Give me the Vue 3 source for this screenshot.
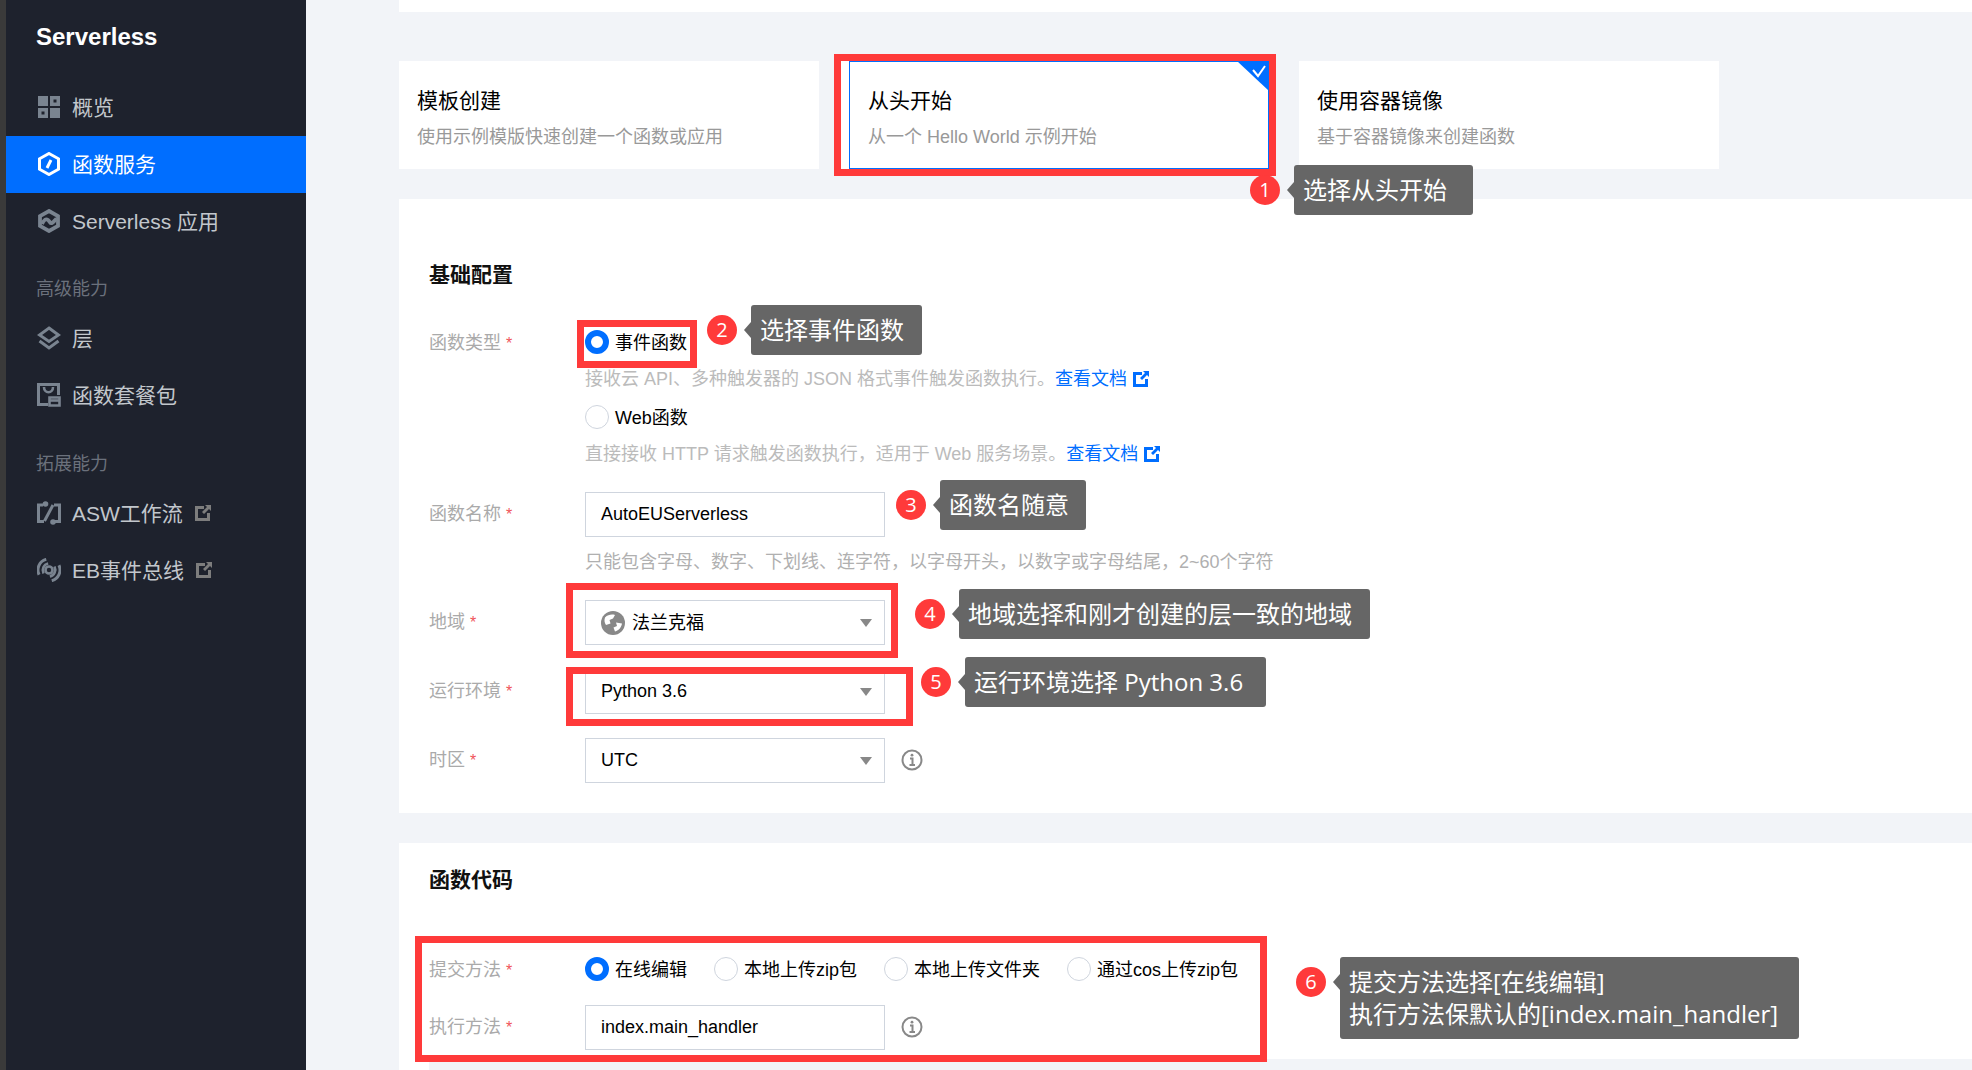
<template>
  <div class="page">
    <aside class="sidebar">
      <div class="brand">Serverless</div>
      <template v-for="group in menu" :key="group.title">
        <div v-if="group.title !== 'main'" class="menu-group">{{ group.title }}</div>
        <div
          v-for="item in group.items"
          :key="item.name"
          class="menu-item"
          :class="{ active: item.active }"
        >
          <svg class="menu-icon" viewBox="0 0 24 24">
            <template v-if="item.icon === 'overview'">
              <path fill-rule="evenodd" d="M1 1h10v10H1zM13 1h10v10H13zM16.500 4.500v3h3v-3zM1 13h10v10H1zM4.500 16.500v3h3v-3zM13 13h10v10H13z" />
            </template>
            <template v-else-if="item.icon === 'func'">
              <path class="line thick" d="M12 1.500 21.500 6.800V17.200L12 22.500 2.500 17.200V6.800Z" />
              <path class="line thick" d="M14 8 10 16" />
            </template>
            <template v-else-if="item.icon === 'app'">
              <path class="line heavy" d="M12 2 21 7V17L12 22 3 17V7Z" />
              <path class="line heavy" d="M5 15C7 10.500 9 9.500 11 11S13 15 15 14 17.500 11.500 19.500 9.500" />
            </template>
            <template v-else-if="item.icon === 'layer'">
              <path class="line thick" d="M12 2 21.500 9 12 15.500 2.500 9Z" />
              <path class="line thick" d="M2.500 15 12 22 21.500 15" />
            </template>
            <template v-else-if="item.icon === 'bundle'">
              <path class="line thick" d="M11 21.500H1.500V1.500H21.500V12" />
              <path class="line" d="M7 4C7 11 16 11 16 4" />
              <path class="line" d="M12.500 14.500H22.500V22.500H12.500Z" />
              <path class="line" d="M12.500 17.500H22.500" />
            </template>
            <template v-else-if="item.icon === 'flow'">
              <path class="line thick" d="M6 4H1.500V20.500H7M18 20.500H22.500V4H17" />
              <path class="line thick" d="M16 4 7.500 20" />
              <circle cx="8.500" cy="3" r="2.800" />
              <circle cx="16" cy="21" r="2.800" />
            </template>
            <template v-else>
              <g transform="rotate(25 12 12)">
                <path class="line thick" d="M5 3.500A11 11 0 0 0 5 20.500M19 3.500A11 11 0 0 1 19 20.500" />
                <path class="line" d="M8.500 6.500A7 7 0 0 0 8.500 17.500M15.500 6.500A7 7 0 0 1 15.500 17.500" />
              </g>
              <circle class="line" cx="12" cy="12" r="3.500" />
            </template>
          </svg>
          <span class="menu-text">{{ item.name }}</span>
          <svg v-if="item.external" class="ext-icon side-ext" viewBox="0 0 16 16">
            <path d="M0 1h9v3H3v9h9V8h3v8H0z" />
            <path d="M10 0h6v6l-2-2-5 5-2-2 5-5z" />
          </svg>
        </div>
      </template>
    </aside>

    <main class="main">
      <div class="top-strip"></div>

      <div class="cards">
        <div
          v-for="card in cards"
          :key="card.title"
          class="card"
          :class="{ selected: card.selected }"
        >
          <div class="card-title">{{ card.title }}</div>
          <div class="card-sub">{{ card.sub }}</div>
          <svg v-if="card.selected" class="card-check" viewBox="0 0 32 30">
            <path d="M0 0h32v30z" fill="#006eff" />
            <path d="M16 9l5 6 7-10" fill="none" stroke="#fff" stroke-width="2" />
          </svg>
        </div>
      </div>

      <section class="panel basic">
        <h2 class="panel-title">基础配置</h2>
        <div class="form">
          <div class="form-row">
            <label class="form-label short">函数类型<i>*</i></label>
            <div class="form-field">
              <div class="radio-line">
                <span class="radio on"></span>
                <span class="radio-text">事件函数</span>
              </div>
              <p class="desc first">
                接收云 API、多种触发器的 JSON 格式事件触发函数执行。<a>查看文档</a>
                <svg class="ext-icon blue" viewBox="0 0 16 16">
                  <path d="M0 1h9v3H3v9h9V8h3v8H0z" />
                  <path d="M10 0h6v6l-2-2-5 5-2-2 5-5z" />
                </svg>
              </p>
              <div class="radio-line second">
                <span class="radio"></span>
                <span class="radio-text">Web函数</span>
              </div>
              <p class="desc first">
                直接接收 HTTP 请求触发函数执行，适用于 Web 服务场景。<a>查看文档</a>
                <svg class="ext-icon blue" viewBox="0 0 16 16">
                  <path d="M0 1h9v3H3v9h9V8h3v8H0z" />
                  <path d="M10 0h6v6l-2-2-5 5-2-2 5-5z" />
                </svg>
              </p>
            </div>
          </div>

          <div class="form-row">
            <label class="form-label">函数名称<i>*</i></label>
            <div class="form-field">
              <div class="input">AutoEUServerless</div>
              <p class="desc hint">只能包含字母、数字、下划线、连字符，以字母开头，以数字或字母结尾，2~60个字符</p>
            </div>
          </div>

          <div class="form-row">
            <label class="form-label">地域<i>*</i></label>
            <div class="input select">
              <svg class="globe" viewBox="0 0 24 24">
                <circle cx="12" cy="12" r="12" fill="#888" />
                <path d="M4 6.500C7 3.500 11 3 14 4L12 7.500 8.500 9 9.500 12.500 5 14C3.500 12 3 9 4 6.500Z" fill="#fff" />
                <path d="M15 11.500 21 12.500C20.500 16 18 19.500 14 20.500L12.500 16.500 16 15Z" fill="#fff" />
              </svg>
              <span class="cjk-value">法兰克福</span>
            </div>
          </div>

          <div class="form-row">
            <label class="form-label">运行环境<i>*</i></label>
            <div class="input select">Python 3.6</div>
          </div>

          <div class="form-row">
            <label class="form-label">时区<i>*</i></label>
            <div class="input select">UTC</div>
            <svg class="info" viewBox="0 0 22 22">
              <circle cx="11" cy="11" r="9.500" />
              <path d="M9 9.500h2.500V16M8.500 16h5.500" />
              <circle class="dot" cx="11" cy="6.200" r="1.400" />
            </svg>
          </div>
        </div>
      </section>

      <section class="panel code">
        <h2 class="panel-title">函数代码</h2>
        <div class="form code-form">
          <div class="form-row">
            <label class="form-label short">提交方法<i>*</i></label>
            <div class="radio-group">
              <div v-for="way in submitWays" :key="way.name" class="radio-line" :class="way.cls">
                <span class="radio" :class="{ on: way.on }"></span>
                <span class="radio-text">{{ way.name }}</span>
              </div>
            </div>
          </div>
          <div class="form-row">
            <label class="form-label">执行方法<i>*</i></label>
            <div class="input">index.main_handler</div>
            <svg class="info" viewBox="0 0 22 22">
              <circle cx="11" cy="11" r="9.500" />
              <path d="M9 9.500h2.500V16M8.500 16h5.500" />
              <circle class="dot" cx="11" cy="6.200" r="1.400" />
            </svg>
          </div>
        </div>
        <div class="editor"></div>
      </section>
    </main>

    <!-- annotations drawn over the screenshot -->
    <div
      v-for="(box, i) in redBoxes"
      :key="'box' + i"
      class="red-box"
      :style="{ left: box[0] + 'px', top: box[1] + 'px', width: box[2] + 'px', height: box[3] + 'px' }"
    ></div>
    <template v-for="note in notes" :key="note.n">
      <div class="badge" :style="{ left: note.cx - 15 + 'px', top: note.cy - 15 + 'px' }">{{ note.n }}</div>
      <div
        class="bubble"
        :style="{ left: note.x + 'px', top: note.y + 'px', width: note.w + 'px', height: note.h + 'px' }"
      >
        <div v-for="line in note.lines" :key="line">{{ line }}</div>
      </div>
    </template>
  </div>
</template>

<script setup>
const menu = [
  {
    title: 'main',
    items: [
      { name: '概览', icon: 'overview' },
      { name: '函数服务', icon: 'func', active: true },
      { name: 'Serverless 应用', icon: 'app' },
    ],
  },
  {
    title: '高级能力',
    items: [
      { name: '层', icon: 'layer' },
      { name: '函数套餐包', icon: 'bundle' },
    ],
  },
  {
    title: '拓展能力',
    items: [
      { name: 'ASW工作流', icon: 'flow', external: true },
      { name: 'EB事件总线', icon: 'bus', external: true },
    ],
  },
];

const cards = [
  { title: '模板创建', sub: '使用示例模版快速创建一个函数或应用' },
  { title: '从头开始', sub: '从一个 Hello World 示例开始', selected: true },
  { title: '使用容器镜像', sub: '基于容器镜像来创建函数' },
];

const submitWays = [
  { name: '在线编辑', on: true, cls: 'w1' },
  { name: '本地上传zip包', cls: 'w2' },
  { name: '本地上传文件夹', cls: 'w3' },
  { name: '通过cos上传zip包', cls: 'w4' },
];

const redBoxes = [
  [834, 54, 442, 122],
  [577, 320, 120, 48],
  [566, 583, 332, 75],
  [566, 667, 347, 59],
  [415, 936, 852, 126],
];

const notes = [
  { n: 1, cx: 1265, cy: 190, x: 1294, y: 165, w: 179, h: 50, lines: ['选择从头开始'] },
  { n: 2, cx: 722, cy: 330, x: 751, y: 305, w: 171, h: 50, lines: ['选择事件函数'] },
  { n: 3, cx: 911, cy: 505, x: 940, y: 480, w: 146, h: 50, lines: ['函数名随意'] },
  { n: 4, cx: 930, cy: 614, x: 959, y: 589, w: 411, h: 50, lines: ['地域选择和刚才创建的层一致的地域'] },
  { n: 5, cx: 936, cy: 682, x: 965, y: 657, w: 301, h: 50, lines: ['运行环境选择 Python 3.6'] },
  {
    n: 6,
    cx: 1311,
    cy: 982,
    x: 1340,
    y: 957,
    w: 459,
    h: 82,
    lines: ['提交方法选择[在线编辑]', '执行方法保默认的[index.main_handler]'],
  },
];
</script>

<style>
html,
body {
  margin: 0;
  overflow: hidden;
  background: #f2f4f8;
}
</style>

<style scoped>
.page {
  position: relative;
  display: flex;
  width: 1972px;
  height: 1070px;
  overflow: hidden;
  background: #f2f4f8;
  border-left: 6px solid #3a3a3a;
  box-sizing: border-box;
  font-family: "Liberation Sans", "Noto Sans CJK SC", sans-serif;
  font-size: 18px;
  color: #000;
}

.sidebar {
  flex: 0 0 300px;
  background: #1e222d;
  color: #c2c7cc;
}

.brand {
  padding: 22px 0 27px 30px;
  line-height: 30px;
  font-size: 24px;
  font-weight: bold;
  color: #fff;
}

.menu-item {
  display: flex;
  align-items: center;
  height: 57px;
  box-sizing: border-box;
  padding: 0 0 2px 31px;
  font-size: 21px;
}

.menu-text {
  padding-bottom: 2px;
}

.menu-item.active {
  background: #006eff;
  color: #fff;
}

.menu-icon {
  flex: none;
  width: 24px;
  height: 24px;
  margin-right: 11px;
  fill: #7a8490;
}

.menu-icon .line {
  fill: none;
  stroke: #7a8490;
  stroke-width: 2.600;
}

.menu-icon .line.thick {
  stroke-width: 3;
}

.menu-icon .line.heavy {
  stroke-width: 3.800;
}

.menu-item.active .menu-icon .line {
  stroke: #fff;
}

.menu-group {
  margin: 27px 0 9.500px;
  padding-left: 30px;
  line-height: 24px;
  font-size: 18px;
  color: #6b717c;
}

.ext-icon {
  flex: none;
  width: 16px;
  height: 16px;
  fill: #7d7d7d;
}

.side-ext {
  margin-left: 12px;
}

.ext-icon.blue {
  margin-left: 6px;
  vertical-align: -2px;
  fill: #006eff;
}

.main {
  flex: 1;
  min-width: 0;
  padding-left: 93px;
}

.top-strip {
  height: 12px;
  background: #fff;
}

.cards {
  display: flex;
  gap: 30px;
  margin: 49px 0 30px;
}

.card {
  position: relative;
  flex: 0 0 420px;
  height: 108px;
  box-sizing: border-box;
  padding: 25px 18px 0;
  background: #fff;
}

.card.selected {
  padding: 24px 18px 0;
  border: 1px solid #006eff;
  box-shadow: -8px 0 0 #fff;
}

.card-title {
  line-height: 30px;
  font-size: 21px;
}

.card-sub {
  margin-top: 8px;
  line-height: 26px;
  color: #999;
}

.card-check {
  position: absolute;
  top: -1px;
  right: -1px;
  width: 32px;
  height: 30px;
}

.panel {
  padding-left: 30px;
  background: #fff;
}

.basic {
  height: 614px;
  padding-top: 61px;
  box-sizing: border-box;
  margin-bottom: 30px;
}

.code {
  padding-top: 22px;
  height: 300px;
  box-sizing: border-box;
}

.panel-title {
  margin: 0 0 38px;
  line-height: 30px;
  font-size: 21px;
  font-weight: bold;
  color: #111;
}

.code .panel-title {
  margin-bottom: 60px;
}

.form {
  display: flex;
  flex-direction: column;
  gap: 24px;
}

.code-form {
  gap: 22px;
}

.form-row {
  display: flex;
  align-items: flex-start;
}

.form-label {
  flex: 0 0 156px;
  height: 45px;
  line-height: 45px;
  color: #aaa;
}

.form-label.short {
  height: 28px;
  line-height: 30px;
}

.form-label i {
  margin-left: 5px;
  line-height: 0;
  font-style: normal;
  font-size: 16px;
  color: #f0545a;
}

.radio-line {
  display: flex;
  align-items: center;
  gap: 6px;
  height: 28px;
}

.radio-text {
  padding-bottom: 2px;
}

.radio-line.second {
  margin-top: 10px;
}

.radio {
  width: 24px;
  height: 24px;
  box-sizing: border-box;
  border: 1px solid #cfd5de;
  border-radius: 50%;
  background: #fff;
}

.radio.on {
  border: 6px solid #006eff;
}

.radio-group {
  display: flex;
}

.w1 {
  width: 129px;
}

.w2 {
  width: 170px;
}

.w3 {
  width: 183px;
}

.desc {
  margin: 0;
  color: #bbb;
}

.desc a {
  color: #006eff;
}

.desc.first {
  height: 28px;
  margin-top: 9px;
  line-height: 28px;
}

.desc.hint {
  height: 27px;
  margin-top: 12px;
  line-height: 27px;
  color: #b0b0b0;
}

.input {
  position: relative;
  display: flex;
  align-items: center;
  width: 300px;
  height: 45px;
  box-sizing: border-box;
  padding-left: 15px;
  border: 1px solid #cfd5de;
  background: #fff;
}

.cjk-value {
  padding-bottom: 3px;
}

.select::after {
  content: "";
  position: absolute;
  right: 12px;
  top: 18px;
  border-top: 8px solid #888;
  border-left: 6px solid transparent;
  border-right: 6px solid transparent;
}

.globe {
  width: 24px;
  height: 24px;
  margin-right: 7px;
}

.info {
  width: 22px;
  height: 22px;
  margin: 11px 0 0 16px;
  fill: none;
  stroke: #888;
  stroke-width: 2;
}

.info .dot {
  fill: #888;
  stroke: none;
}

.editor {
  height: 30px;
  margin-top: 9px;
  background: #f2f4f8;
}

.red-box {
  position: absolute;
  box-sizing: border-box;
  margin-left: -6px;
  border: 7px solid #ff3a3a;
}

.badge {
  position: absolute;
  width: 30px;
  height: 30px;
  margin-left: -6px;
  border-radius: 50%;
  background: #ff3a3a;
  color: #fff;
  text-align: center;
  line-height: 30px;
  font-family: "Open Sans", "Noto Sans CJK SC", sans-serif;
  font-size: 20px;
}

.bubble {
  position: absolute;
  margin-left: -6px;
  box-sizing: border-box;
  padding: 9px 9px;
  border-radius: 3px;
  background: #666;
  color: #fff;
  line-height: 32px;
  white-space: nowrap;
  font-family: "Open Sans", "Noto Sans CJK SC", sans-serif;
  font-size: 24px;
}

.bubble::before {
  content: "";
  position: absolute;
  left: -7px;
  top: 17px;
  border-top: 8px solid transparent;
  border-bottom: 8px solid transparent;
  border-right: 7px solid #666;
}
</style>
